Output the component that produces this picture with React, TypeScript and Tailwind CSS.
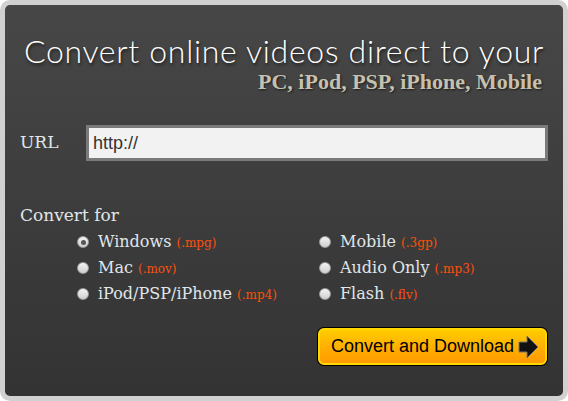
import React from 'react';

const options = [
  { label: 'Windows', ext: '(.mpg)', checked: true },
  { label: 'Mobile', ext: '(.3gp)' },
  { label: 'Mac', ext: '(.mov)' },
  { label: 'Audio Only', ext: '(.mp3)' },
  { label: 'iPod/PSP/iPhone', ext: '(.mp4)' },
  { label: 'Flash', ext: '(.flv)' },
];

const Radio = ({ checked }: { checked?: boolean }) => (
  <span className="w-[12px] h-[12px] rounded-full bg-gradient-to-b from-[#f4f4f4] to-[#cfcfcf] border border-[#9a9a9a] flex items-center justify-center shrink-0">
    {checked && <span className="w-[5px] h-[5px] rounded-full bg-[#555]" />}
  </span>
);

const App: React.FC = () => {
  return (
    <div className="w-[568px] h-[401px] bg-white">
      <div className="w-full h-full rounded-[10px] border-[5px] border-[#d1d1d1] bg-gradient-to-b from-[#474747] to-[#333333] flex flex-col px-[15px] font-['DejaVu_Serif',serif] text-[#e0e6ea]">
        <h1 className="mt-[28px] text-[32px] leading-[36px] text-white text-center whitespace-nowrap font-['Lato',sans-serif] font-light tracking-[0.7px] [text-shadow:1px_2px_3px_rgba(0,0,0,0.6)]">
          Convert online videos direct to your
        </h1>
        <div className="text-right pr-[6px] font-['Liberation_Serif',serif] text-[22px] leading-[26px] font-bold text-[#c6c1ae] [text-shadow:1px_1px_2px_rgba(0,0,0,0.6)]">
          PC, iPod, PSP, iPhone, Mobile
        </div>

        <div className="mt-[30px] flex items-center">
          <span className="w-[66px] text-[17px]">URL</span>
          <div className="w-[462px] h-[36px] border-[3px] border-[#7a7a7a] bg-[#f2f2f2] flex items-center px-[4px] font-['Liberation_Sans',sans-serif] text-[18px] text-[#333]">
            http://
          </div>
        </div>

        <div className="mt-[42px] text-[17px] leading-[24px]">Convert for</div>
        <div className="mt-[3px] ml-[57px] grid grid-cols-[242px_1fr] gap-y-[2px]">
          {options.map((o) => (
            <div key={o.label} className="flex items-center gap-[9px] h-[24px]">
              <Radio checked={o.checked} />
              <span className="text-[16px] whitespace-nowrap">
                {o.label} <span className="text-[12px] text-[#ff4f0a]">{o.ext}</span>
              </span>
            </div>
          ))}
        </div>

        <div className="mt-[21px] flex justify-end">
          <button className="w-[231px] h-[39px] rounded-[7px] bg-black p-[1px]">
            <span className="w-full h-full rounded-[6px] border-2 border-[#ffd800] bg-gradient-to-b from-[#ffcc00] via-[#ffb000] to-[#ff9a00] flex items-center pl-[11px] pr-[6px] justify-between font-['Liberation_Sans',sans-serif] text-[18px] text-black">
              Convert and Download
              <svg width="22" height="24" viewBox="0 0 22 24">
                <path d="M2 7 H10 V1 L21 12 L10 23 V17 H2 Z" fill="#111" stroke="#777" strokeWidth="1" />
              </svg>
            </span>
          </button>
        </div>
      </div>
    </div>
  );
};

export default App;
